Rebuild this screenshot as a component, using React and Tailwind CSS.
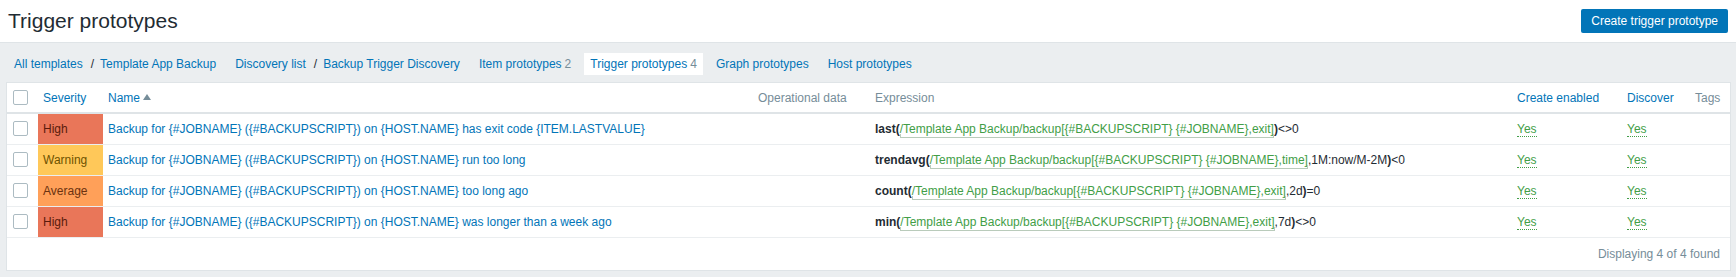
import React from 'react';

const blue = 'text-[#0275b8]';

const navItems = [
    { crumbs: ['All templates', 'Template App Backup'] },
    { crumbs: ['Discovery list', 'Backup Trigger Discovery'] },
    { label: 'Item prototypes', count: 2 },
    { label: 'Trigger prototypes', count: 4, active: true },
    { label: 'Graph prototypes' },
    { label: 'Host prototypes' },
];

const severityStyles = {
    High: 'bg-[#e97659] text-[#5a1b0c]',
    Warning: 'bg-[#ffc859] text-[#6e5200]',
    Average: 'bg-[#ffa059] text-[#6b3210]',
};

const triggers = [
    { severity: 'High', name: 'Backup for {#JOBNAME} ({#BACKUPSCRIPT}) on {HOST.NAME} has exit code {ITEM.LASTVALUE}', fn: 'last', arg: 'exit]', rest: '', tail: '<>0' },
    { severity: 'Warning', name: 'Backup for {#JOBNAME} ({#BACKUPSCRIPT}) on {HOST.NAME} run too long', fn: 'trendavg', arg: 'time]', rest: ',1M:now/M-2M', tail: '<0' },
    { severity: 'Average', name: 'Backup for {#JOBNAME} ({#BACKUPSCRIPT}) on {HOST.NAME} too long ago', fn: 'count', arg: 'exit]', rest: ',2d', tail: '=0' },
    { severity: 'High', name: 'Backup for {#JOBNAME} ({#BACKUPSCRIPT}) on {HOST.NAME} was longer than a week ago', fn: 'min', arg: 'exit]', rest: ',7d', tail: '<>0' },
];

const Checkbox = () => (
    <span className="block w-[15px] h-[15px] border border-[#acbbc2] rounded-[2px] bg-white" />
);

const SortArrow = () => (
    <svg width="8" height="6" viewBox="0 0 8 6" className="inline-block ml-[3px] mb-[2px]">
        <path d="M0 6 L4 0 L8 6 Z" fill="#768d99" />
    </svg>
);

export default function App() {
    return (
        <div className="min-h-[277px] bg-[#ebeef0] text-[12px] text-[#1f2c33] font-['Liberation_Sans',Arial,sans-serif]">
            {/* Header */}
            <div className="h-[43px] bg-white border-b border-[#dfe4e7] flex items-center justify-between pl-[8px] pr-[8px]">
                <h1 className="text-[21px] leading-[24px] font-normal text-[#1f2c33]">Trigger prototypes</h1>
                <button className="h-[24px] px-[10px] bg-[#0275b8] text-white text-[12px] rounded-[2px]">Create trigger prototype</button>
            </div>

            {/* Navigation */}
            <div className="flex items-center gap-[7px] pl-[8px] pt-[10px] pb-[7px]">
                {navItems.map((item, i) => (
                    <div
                        key={i}
                        className={`h-[22px] px-[6px] flex items-center ${item.active ? 'bg-white' : ''}`}
                    >
                        {item.crumbs ? (
                            <>
                                <span className={blue}>{item.crumbs[0]}</span>
                                <span className="ml-[8px] mr-[6px] text-[#1f2c33]">/</span>
                                <span className={blue}>{item.crumbs[1]}</span>
                            </>
                        ) : (
                            <>
                                <span className={blue}>{item.label}</span>
                                {item.count && <span className="ml-[3px] text-[#768d99]">{item.count}</span>}
                            </>
                        )}
                    </div>
                ))}
            </div>

            {/* Table */}
            <div className="ml-[6px] mr-[5px] bg-white border border-[#dfe4e7]">
                <table className="w-full table-fixed border-collapse">
                    <colgroup>
                        <col className="w-[31px]" />
                        <col className="w-[65px]" />
                        <col className="w-[650px]" />
                        <col className="w-[117px]" />
                        <col className="w-[642px]" />
                        <col className="w-[110px]" />
                        <col className="w-[68px]" />
                        <col />
                    </colgroup>
                    <thead>
                        <tr className="h-[30px] border-b-2 border-[#dfe4e7] text-left">
                            <th className="pl-[6px] font-normal"><Checkbox /></th>
                            <th className={`px-[5px] font-normal ${blue}`}>Severity</th>
                            <th className={`px-[5px] font-normal ${blue}`}>Name<SortArrow /></th>
                            <th className="px-[5px] font-normal text-[#768d99]">Operational data</th>
                            <th className="px-[5px] font-normal text-[#768d99]">Expression</th>
                            <th className={`px-[5px] font-normal ${blue}`}>Create enabled</th>
                            <th className={`px-[5px] font-normal ${blue}`}>Discover</th>
                            <th className="px-[5px] font-normal text-[#768d99]">Tags</th>
                        </tr>
                    </thead>
                    <tbody>
                        {triggers.map((t, i) => (
                            <tr key={i} className="h-[31px] border-b border-[#ebeef0]">
                                <td className="pl-[6px]"><Checkbox /></td>
                                <td className={`px-[5px] ${severityStyles[t.severity]}`}>{t.severity}</td>
                                <td className={`px-[5px] ${blue} whitespace-nowrap`}>{t.name}</td>
                                <td className="px-[5px]"></td>
                                <td className="px-[5px] whitespace-nowrap">
                                    <span className="font-bold">{t.fn}(</span>
                                    <span className="relative text-[#429e47] after:absolute after:left-0 after:right-0 after:bottom-[-2px] after:h-[4px] after:border after:border-t-0 after:border-[#b9cbbb]">
                                        /Template App Backup/backup[{'{#BACKUPSCRIPT} {#JOBNAME}'},{t.arg}
                                    </span>
                                    {t.rest}
                                    <span className="font-bold">)</span>
                                    {t.tail}
                                </td>
                                <td className="px-[5px]">
                                    <span className="text-[#429e47] border-b border-dotted border-[#429e47]">Yes</span>
                                </td>
                                <td className="px-[5px]">
                                    <span className="text-[#429e47] border-b border-dotted border-[#429e47]">Yes</span>
                                </td>
                                <td className="px-[5px]"></td>
                            </tr>
                        ))}
                    </tbody>
                </table>
                <div className="h-[32px] flex items-center justify-end pr-[10px] text-[#768d99]">
                    Displaying 4 of 4 found
                </div>
            </div>
        </div>
    );
}
